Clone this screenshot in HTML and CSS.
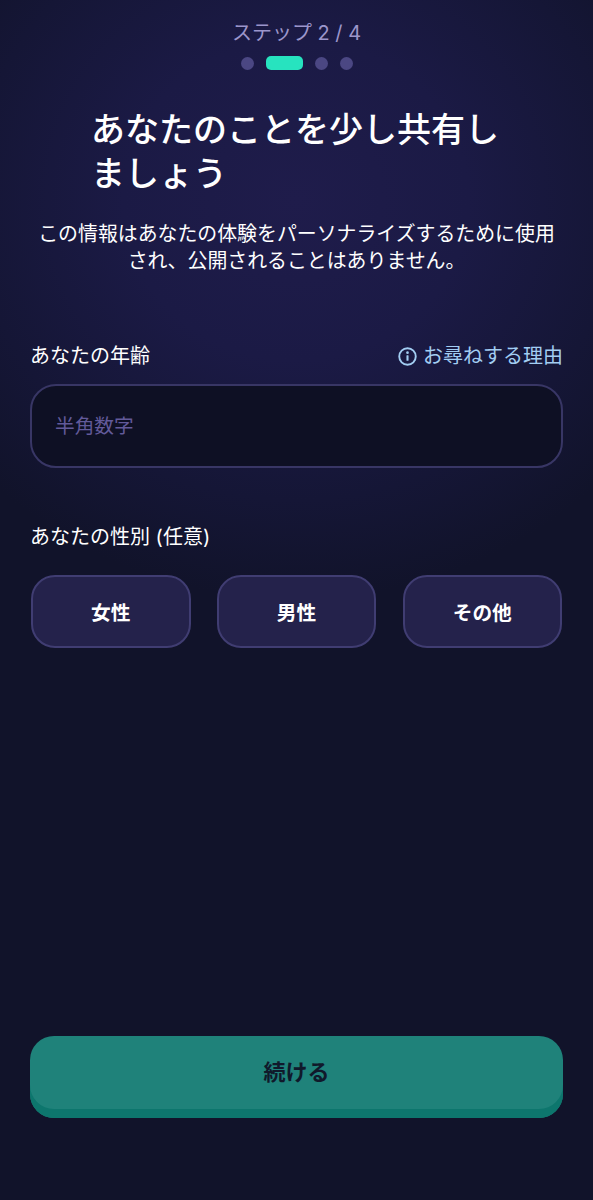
FILE: index.html
```html
<!DOCTYPE html>
<html lang="ja">
<head>
<meta charset="utf-8">
<title>ステップ 2 / 4</title>
<link rel="stylesheet" href="styles.css">
</head>
<body>

<div class="container">
  <div class="step">ステップ 2 / 4</div>
  <div class="dots">
    <span class="dot"></span>
    <span class="dot active"></span>
    <span class="dot"></span>
    <span class="dot"></span>
  </div>

  <h1>あなたのことを少し共有しましょう</h1>
  <p class="intro">この情報はあなたの体験をパーソナライズするために使用され、公開されることはありません。</p>

  <form class="profile-form">
    <div class="label-row">
      <label for="age">あなたの年齢</label>
      <a class="why-link" href="#">
        <svg class="info-icon" viewBox="0 0 20 20" width="20" height="20" aria-hidden="true">
          <circle cx="10" cy="10" r="8.7" fill="none" stroke="currentColor" stroke-width="2"/>
          <rect x="8.9" y="8.6" width="2.2" height="6" rx="0.6" fill="currentColor"/>
          <circle cx="10" cy="6" r="1.4" fill="currentColor"/>
        </svg>
        お尋ねする理由
      </a>
    </div>
    <input type="text" id="age" name="age" placeholder="半角数字">

    <span class="gender-label">あなたの性別 (任意)</span>
    <div class="gender-options">
      <button type="button" class="gender-btn">女性</button>
      <button type="button" class="gender-btn">男性</button>
      <button type="button" class="gender-btn">その他</button>
    </div>

    <button type="submit" class="continue-btn">続ける</button>
  </form>
</div>

</body>
</html>
```

FILE: styles.css
```css
* {
  box-sizing: border-box;
}

body {
  margin: 0;
  min-height: 100vh;
  background-color: #11132a;
  background-image: radial-gradient(ellipse 430px 400px at 296px 200px, #1f1c4b 0%, #1b1a45 40%, #151636 75%, #11132a 100%);
  background-repeat: no-repeat;
  color: #fff;
  font-family: "Inter", "Noto Sans CJK JP", sans-serif;
}

.container {
  display: flex;
  flex-direction: column;
  min-height: 100vh;
  padding: 19px 30px 82px;
}

.step {
  text-align: center;
  font-size: 20px;
  line-height: 28px;
  color: #9c96cb;
}

.dots {
  display: flex;
  justify-content: center;
  align-items: center;
  gap: 12px;
  margin-top: 9px;
}

.dot {
  width: 13px;
  height: 13px;
  border-radius: 50%;
  background-color: #4b4783;
}

.dot.active {
  width: 37px;
  height: 14px;
  border-radius: 5px;
  background-color: #27e3bf;
}

h1 {
  margin: 38px 61px 0;
  font-size: 34px;
  line-height: 44px;
  font-weight: 500;
}

.intro {
  margin: 25px 0 0;
  text-align: center;
  font-size: 19.9px;
  line-height: 27px;
  text-spacing-trim: trim-end;
}

.profile-form {
  display: flex;
  flex-direction: column;
  flex: 1;
  margin-top: 65px;
}

.label-row {
  display: flex;
  justify-content: space-between;
  align-items: center;
  height: 28px;
  font-size: 20px;
}

.why-link {
  display: flex;
  align-items: center;
  gap: 6px;
  color: #a2cdf2;
  text-decoration: none;
}

.info-icon {
  width: 19px;
  height: 19px;
  margin-top: 4px;
}

input[type="text"] {
  width: 100%;
  height: 84px;
  margin-top: 16px;
  padding: 0 23px;
  background-color: #0e1024;
  border: 2px solid #383665;
  border-radius: 26px;
  color: #fff;
  font-family: inherit;
  font-size: 19.7px;
}

input::placeholder {
  color: #625a9a;
  opacity: 1;
}

.gender-label {
  margin-top: 55px;
  font-size: 20px;
  line-height: 28px;
}

.gender-options {
  display: flex;
  justify-content: space-between;
  margin-top: 24px;
  padding: 0 1px;
}

.gender-btn {
  width: 159.5px;
  height: 73px;
  background-color: #24224b;
  border: 2px solid #403d72;
  border-radius: 24px;
  color: #fff;
  font-family: inherit;
  font-size: 19.7px;
  font-weight: 700;
}

.continue-btn {
  margin-top: auto;
  width: 100%;
  height: 82px;
  padding: 0 0 14px;
  background-color: #1f827a;
  border: none;
  border-radius: 24px;
  box-shadow: inset 0 -9px 0 #0d766d;
  color: #10192b;
  font-family: inherit;
  font-size: 22px;
  font-weight: 700;
}
```
